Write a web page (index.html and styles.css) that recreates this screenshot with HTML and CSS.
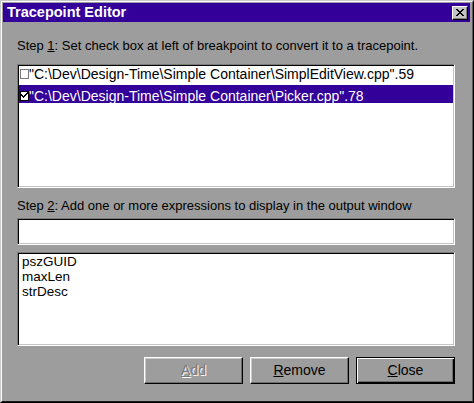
FILE: index.html
```html
<!DOCTYPE html>
<html>
<head>
<meta charset="utf-8">
<link rel="stylesheet" href="styles.css">
</head>
<body>
<div class="window">
  <div class="window-inner">
    <div class="titlebar">
      <span class="title">Tracepoint Editor</span>
      <button class="close-btn" aria-label="Close">
        <svg width="8" height="7" viewBox="0 0 8 7" shape-rendering="crispEdges">
          <path d="M0 0h2v1H0zM6 0h2v1H6zM1 1h2v1H1zM5 1h2v1H5zM2 2h4v1H2zM3 3h2v1H3zM2 4h4v1H2zM1 5h2v1H1zM5 5h2v1H5zM0 6h2v1H0zM6 6h2v1H6z" fill="#000"/>
        </svg>
      </button>
    </div>
    <div class="content">
      <p class="label label-1">Step <u>1</u>: Set check box at left of breakpoint to convert it to a tracepoint.</p>
      <div class="sunken list-1">
        <div class="row row-1"><span class="check"></span>"C:\Dev\Design-Time\Simple Container\SimplEditView.cpp".59</div>
        <div class="row row-2 selected"><span class="check checked"><svg width="7" height="7" viewBox="0 0 7 7" shape-rendering="crispEdges"><path d="M6 0h1v1H6zM5 1h2v1H5zM0 2h1v1H0zM4 2h2v1H4zM0 3h2v1H0zM3 3h2v1H3zM1 4h3v1H1zM2 5h1v1H2z" fill="#000"/></svg></span>"C:\Dev\Design-Time\Simple Container\Picker.cpp".78</div>
      </div>
      <p class="label label-2">Step <u>2</u>: Add one or more expressions to display in the output window</p>
      <div class="sunken textbox"></div>
      <div class="sunken list-2">
        <div class="item">pszGUID</div>
        <div class="item">maxLen</div>
        <div class="item">strDesc</div>
      </div>
      <div class="buttons">
        <div class="btn disabled"><span class="btn-face"><u>A</u>dd</span></div>
        <div class="btn"><span class="btn-face"><u>R</u>emove</span></div>
        <div class="btn default"><span class="btn-face"><u>C</u>lose</span></div>
      </div>
    </div>
  </div>
</div>
</body>
</html>
```

FILE: styles.css
```css
* { box-sizing: border-box; }
html, body {
  margin: 0;
  padding: 0;
  background: #9d9d9d;
}
body {
  font-family: "Liberation Sans", Arial, sans-serif;
  font-size: 13px;
  color: #000;
}
.window {
  width: 474px;
  height: 403px;
  border-top: 1px solid #c8c8c8;
  border-left: 1px solid #c8c8c8;
  border-right: 1px solid #000;
  border-bottom: 1px solid #000;
  background: #9d9d9d;
}
.window-inner {
  height: 100%;
  border-top: 1px solid #fff;
  border-left: 1px solid #fff;
  border-right: 1px solid #5a5a5a;
  border-bottom: 1px solid #1a1a1a;
  padding: 1px 2px 0 1px;
}
.titlebar {
  height: 19px;
  background: #330099;
  display: flex;
  align-items: center;
  justify-content: space-between;
  padding: 0 2px 0 4px;
}
.title {
  color: #fff;
  font-weight: bold;
  font-size: 14.5px;
  line-height: 19px;
}
.close-btn {
  width: 16px;
  height: 14px;
  padding: 0;
  margin: 0;
  background: #c4c4c4;
  border-top: 1px solid #fff;
  border-left: 1px solid #fff;
  border-right: 1px solid #000;
  border-bottom: 1px solid #000;
  box-shadow: inset -1px -1px 0 #808080;
  display: flex;
  align-items: center;
  justify-content: center;
}
.close-btn svg { display: block; margin: 0 1px 1px 0; }
.content {
  padding: 0 0 0 14px;
}
.label {
  margin: 0;
  line-height: 15px;
  white-space: nowrap;
}
.label-1 { margin-top: 16px; }
.label-2 { margin-top: 10px; }
.sunken {
  width: 438px;
  background: #fff;
  border-top: 1px solid #7b7b7b;
  border-left: 1px solid #7b7b7b;
  border-right: 1px solid #fff;
  border-bottom: 1px solid #fff;
  box-shadow: inset 1px 1px 0 #000, inset -1px -1px 0 #c4c4c4;
}
.list-1 {
  margin-top: 11px;
  height: 124px;
  padding: 1px 1px 0 1px;
  font-size: 14px;
}
.row {
  line-height: 16px;
  white-space: nowrap;
  display: flex;
  align-items: center;
  padding-left: 1px;
}
.row-1 { height: 19px; padding-bottom: 3px; }
.row-2 { height: 18px; padding-top: 3px; }
.selected {
  background: #330099;
  color: #fff;
}
.check {
  width: 9px;
  height: 10px;
  background: #fff;
  border: 1px solid #7b7b7b;
  margin-right: 0;
  flex: none;
  display: flex;
  align-items: center;
  justify-content: center;
}
.check.checked {
  border-color: #000;
}
.check svg { display: block; }
.textbox {
  margin-top: 5px;
  height: 27px;
}
.list-2 {
  margin-top: 7px;
  height: 94px;
  padding: 1px 2px 0 4px;
  font-size: 13.5px;
}
.item {
  line-height: 15px;
}
.buttons {
  margin-top: 11px;
  width: 438px;
  display: flex;
  justify-content: flex-end;
  gap: 7px;
  font-size: 14px;
}
.btn {
  width: 99px;
  height: 27px;
  border-top: 1px solid #fff;
  border-left: 1px solid #fff;
  border-right: 1px solid #000;
  border-bottom: 1px solid #000;
  box-shadow: inset -1px -1px 0 #6e6e6e, inset 1px 1px 0 #c8c8c8;
  display: flex;
  align-items: center;
  justify-content: center;
  background: #9d9d9d;
}
.btn.default {
  border: 1px solid #000;
  box-shadow: inset 1px 1px 0 #fff, inset -1px -1px 0 #000, inset -2px -2px 0 #6e6e6e;
}
.btn-face {
  line-height: 16px;
  padding-bottom: 1px;
}
.btn.disabled .btn-face {
  color: #7b7b7b;
  text-shadow: 1px 1px 0 #fff;
}
```
